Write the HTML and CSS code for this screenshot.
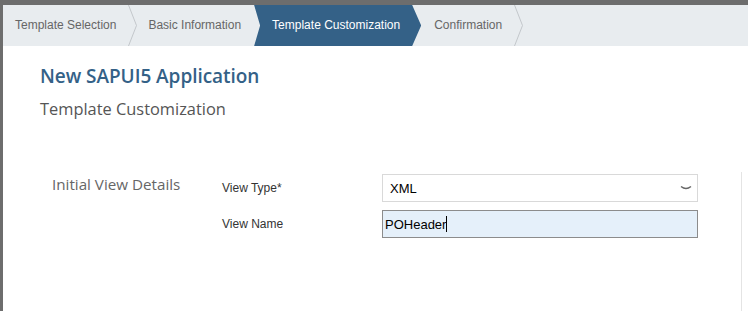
FILE: index.html
```html
<!DOCTYPE html>
<html lang="en">

<head>
  <meta charset="UTF-8">
  <title>New SAPUI5 Application</title>
  <link rel="stylesheet" href="styles.css">
</head>

<body>
  <div class="dialog">
    <div class="steps">
      <div class="step first">Template Selection</div>
      <svg class="sep" width="10" height="41" viewBox="0 0 10 41"><polyline points="0.5,0 8.5,20.5 0.5,41" fill="none" stroke="#c3c7cb" stroke-width="1"/></svg>
      <div class="step second">Basic Information</div>
      <div class="step active">Template Customization</div>
      <div class="step">Confirmation</div>
      <svg class="sep" width="10" height="41" viewBox="0 0 10 41"><polyline points="0.5,0 8.5,20.5 0.5,41" fill="none" stroke="#c3c7cb" stroke-width="1"/></svg>
    </div>

    <div class="content">
      <h1>New SAPUI5 Application</h1>
      <h2>Template Customization</h2>

      <div class="section">
        <div class="section-title">Initial View Details</div>
        <div class="fields">
          <div class="row">
            <label>View Type*</label>
            <div class="select">
              <span>XML</span>
              <svg width="12" height="6" viewBox="0 0 12 6"><path d="M1 1.5 Q6 5.5 11 1.5" fill="none" stroke="#666" stroke-width="1.4"/></svg>
            </div>
          </div>
          <div class="row">
            <label>View Name</label>
            <div class="input">POHeader<span class="caret"></span></div>
          </div>
        </div>
        <div class="side"></div>
      </div>
    </div>
  </div>
</body>

</html>
```

FILE: styles.css
```css
body {
  margin: 0;
  padding: 0;
  height: 311px;
  overflow: hidden;
  background-color: #6d6d6d;
  font-family: "Liberation Sans", Arial, sans-serif;
}

.dialog {
  margin: 5px 0 0 3px;
  height: 306px;
  background-color: #fff;
  display: flex;
  flex-direction: column;
}

.steps {
  height: 41px;
  flex-shrink: 0;
  background-color: #e8ecef;
  display: flex;
  align-items: stretch;
  font-size: 12px;
  line-height: 41px;
  color: #666;
}

.step {
  padding: 0 12px 0 9px;
  white-space: nowrap;
}

.step.first {
  padding-left: 12px;
}

.step.second {
  padding-left: 10px;
  padding-right: 13px;
}

.step.active {
  padding: 0 21px 0 18px;
  background-color: #346187;
  color: #fff;
  clip-path: polygon(0 0, calc(100% - 9px) 0, 100% 50%, calc(100% - 9px) 100%, 0 100%, 6px 50%);
}

.step.active + .step {
  padding-left: 13px;
  padding-right: 12px;
}

.sep {
  flex-shrink: 0;
}

.content {
  flex: 1;
  display: flex;
  flex-direction: column;
  padding-left: 37px;
}

h1 {
  margin: 17px 0 0 0;
  font-family: "Open Sans", sans-serif;
  font-size: 19px;
  line-height: 26px;
  font-weight: 600;
  color: #346187;
  letter-spacing: -0.05px;
}

h2 {
  margin: 8px 0 0 0;
  font-family: "Open Sans", sans-serif;
  font-size: 16.4px;
  line-height: 23px;
  font-weight: 400;
  color: #555;
}

.section {
  flex: 1;
  margin-top: 54px;
  display: flex;
  align-items: flex-start;
}

.section-title {
  width: 170px;
  margin: -1px 0 0 12px;
  font-family: "Open Sans", sans-serif;
  font-size: 15.2px;
  line-height: 22px;
  color: #666;
}

.fields {
  display: flex;
  flex-direction: column;
  gap: 8px;
}

.row {
  display: flex;
  align-items: center;
}

label {
  width: 160px;
  font-size: 12px;
  color: #333;
}

.select,
.input {
  box-sizing: border-box;
  width: 316px;
  height: 28px;
  font-size: 13px;
  color: #000;
  display: flex;
  align-items: center;
}

.select {
  justify-content: space-between;
  padding: 0 5px 0 7px;
  border: 1px solid #d9d9d9;
  background-color: #fff;
}

.input {
  padding: 0 2px;
  border: 1px solid #8c8c8c;
  background-color: #e5f0fa;
}

.caret {
  display: inline-block;
  width: 1px;
  height: 16px;
  background-color: #000;
}

.side {
  align-self: stretch;
  margin: -2px 0 0 43px;
  border-left: 1px solid #e4e4e4;
}
```
